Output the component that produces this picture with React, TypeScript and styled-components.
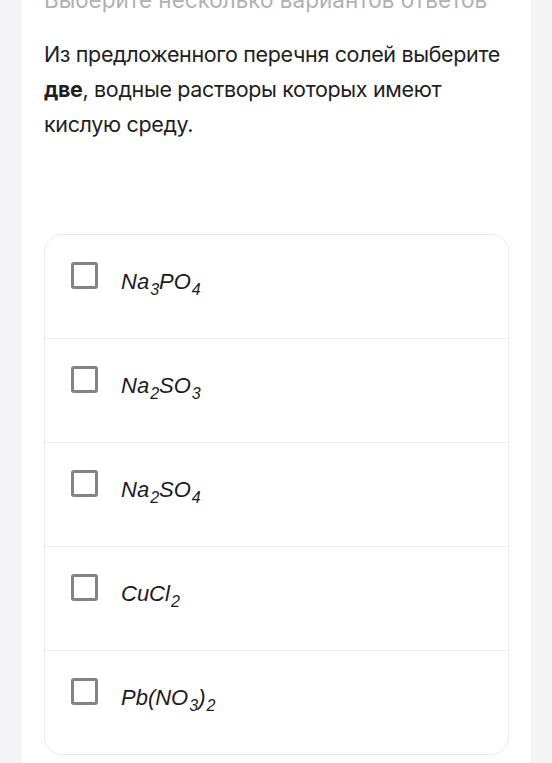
import { Fragment } from "react";
import styled, { createGlobalStyle } from "styled-components";

const GlobalStyle = createGlobalStyle`
  html, body {
    margin: 0;
    padding: 0;
    background: #f4f4f7;
  }
  body {
    font-family: Inter, "Noto Sans", sans-serif;
    overflow: hidden;
  }
`;

const Page = styled.div`
  min-height: 100vh;
  padding: 0 21px 0 22px;
  box-sizing: border-box;
  display: flex;
`;

const Card = styled.div`
  flex: 1;
  background: #ffffff;
  padding: 0 22px 40px 22px;
  display: flex;
  flex-direction: column;
`;

const Hint = styled.div`
  margin-top: -17px;
  font-size: 22.5px;
  line-height: 34px;
  color: #b1b0b8;
  white-space: nowrap;
`;

const Question = styled.div`
  margin-top: 20px;
  font-size: 21.5px;
  line-height: 35px;
  letter-spacing: -0.35px;
  color: #1e1e22;
  b {
    font-weight: 700;
  }
`;

const Options = styled.div`
  margin-top: 92px;
  border: 1px solid #ebebef;
  border-radius: 18px;
  overflow: hidden;
`;

const Row = styled.label`
  display: flex;
  align-items: flex-start;
  gap: 23px;
  height: 103px;
  padding: 27px 26px 0;
  box-sizing: border-box;
  cursor: pointer;
  & + & {
    border-top: 1px solid #ececf0;
    height: 104px;
  }
`;

const Box = styled.span`
  flex: none;
  width: 27px;
  height: 27px;
  box-sizing: border-box;
  border: 3px solid #84828d;
  border-radius: 3px;
  background: #fff;
`;

const Formula = styled.span`
  margin-top: 6px;
  font-family: "Liberation Sans", Arial, sans-serif;
  font-style: italic;
  font-size: 22px;
  line-height: 27px;
  color: #1b1b1f;
`;

const Sub = styled.sub`
  font-size: 16px;
  line-height: 0;
  vertical-align: -6px;
  padding: 0 0 0 1px;
`;

type Part = string | { sub: string };

const answers: Part[][] = [
  ["Na", { sub: "3" }, "PO", { sub: "4" }],
  ["Na", { sub: "2" }, "SO", { sub: "3" }],
  ["Na", { sub: "2" }, "SO", { sub: "4" }],
  ["CuCl", { sub: "2" }],
  ["Pb(NO", { sub: "3" }, ")", { sub: "2" }],
];

export default function App() {
  return (
    <>
      <GlobalStyle />
      <Page>
        <Card>
          <Hint>Выберите несколько вариантов ответов</Hint>
          <Question>
            Из предложенного перечня солей выберите <b>две</b>, водные растворы
            которых имеют кислую среду.
          </Question>
          <Options>
            {answers.map((parts, i) => (
              <Row key={i}>
                <Box />
                <Formula>
                  {parts.map((p, j) => (
                    <Fragment key={j}>
                      {typeof p === "string" ? p : <Sub>{p.sub}</Sub>}
                    </Fragment>
                  ))}
                </Formula>
              </Row>
            ))}
          </Options>
        </Card>
      </Page>
    </>
  );
}
